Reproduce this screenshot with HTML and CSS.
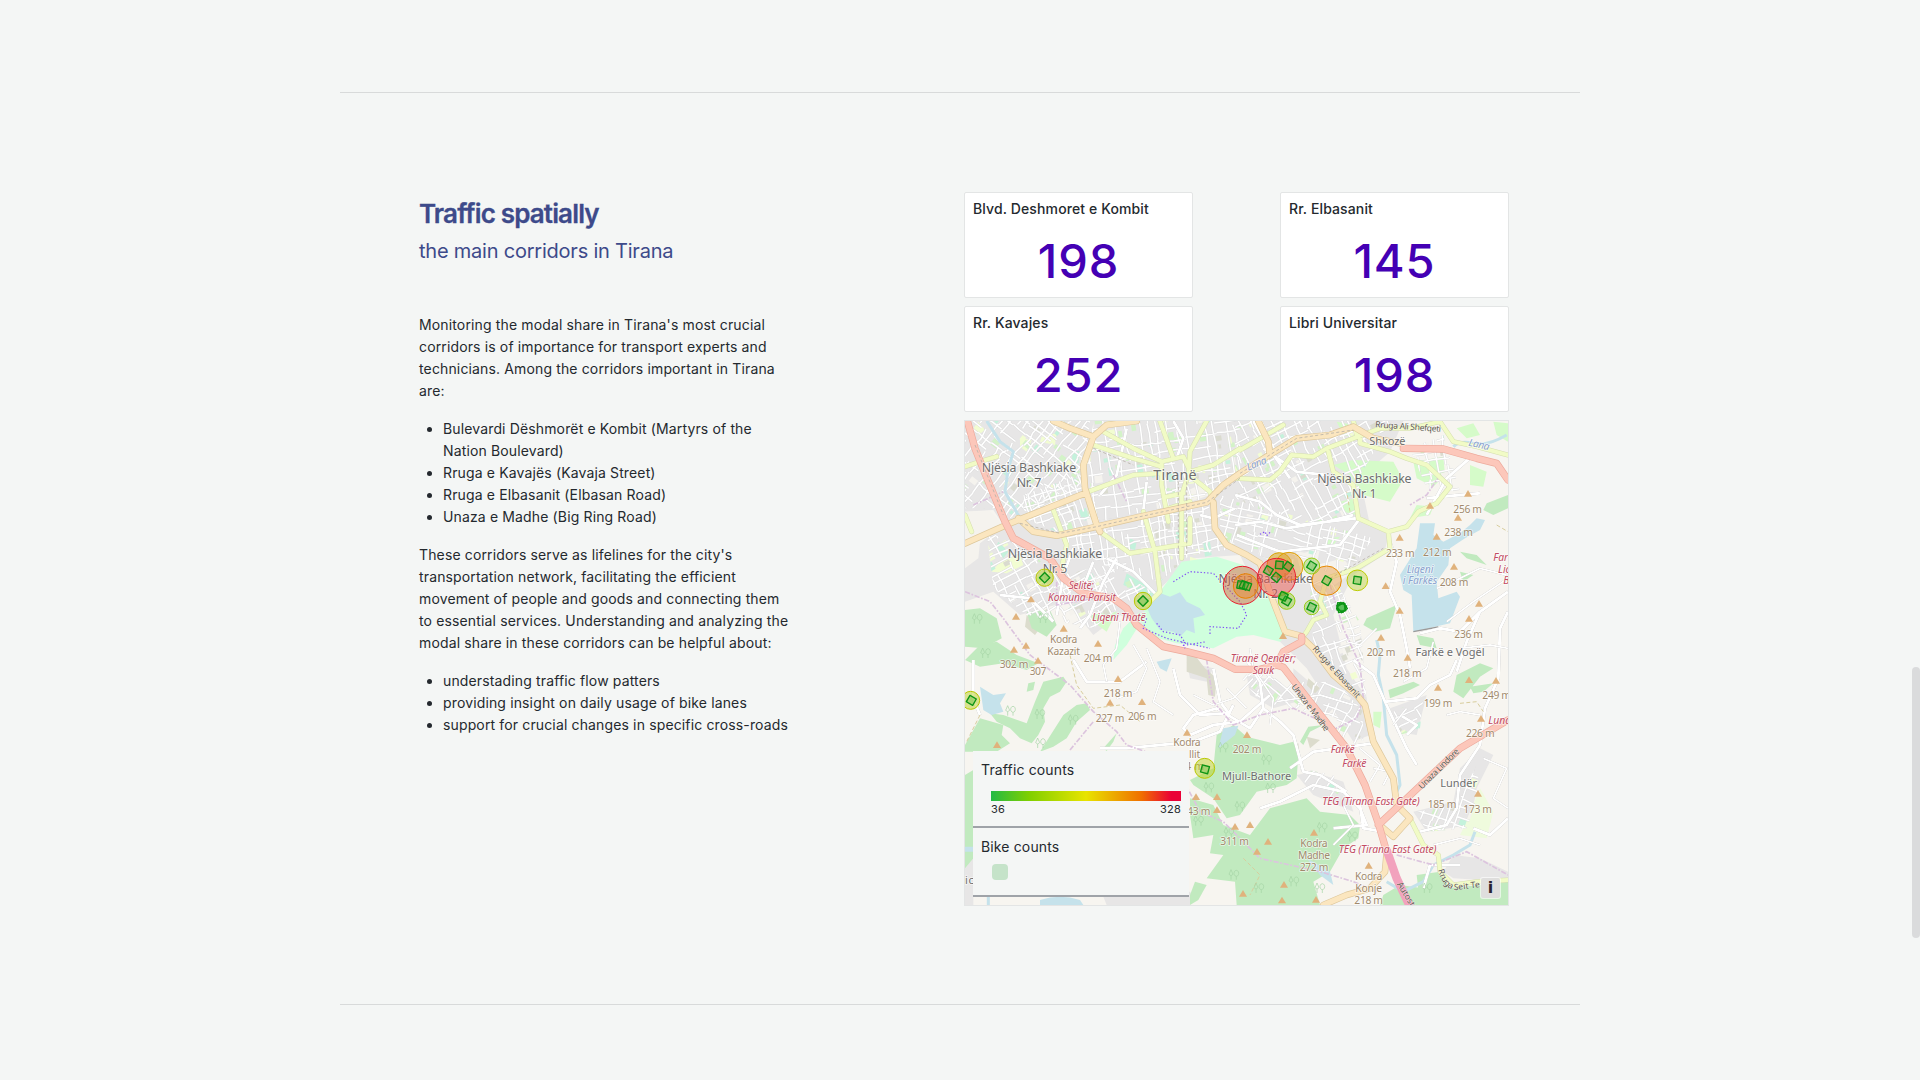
FILE: index.html
```html
<!DOCTYPE html>
<html lang="en">
<head>
<meta charset="utf-8">
<title>Traffic spatially</title>
<link rel="stylesheet" href="styles.css">
</head>
<body>
<main class="page">
<section class="section">
  <article class="copy">
    <h1>Traffic spatially</h1>
    <h2>the main corridors in Tirana</h2>
    <p>Monitoring the modal share in Tirana's most crucial corridors is of importance for transport experts and technicians. Among the corridors important in Tirana are:</p>
    <ul>
      <li>Bulevardi Dëshmorët e Kombit (Martyrs of the Nation Boulevard)</li>
      <li>Rruga e Kavajës (Kavaja Street)</li>
      <li>Rruga e Elbasanit (Elbasan Road)</li>
      <li>Unaza e Madhe (Big Ring Road)</li>
    </ul>
    <p>These corridors serve as lifelines for the city's transportation network, facilitating the efficient movement of people and goods and connecting them to essential services. Understanding and analyzing the modal share in these corridors can be helpful about:</p>
    <ul>
      <li>understading traffic flow patters</li>
      <li>providing insight on daily usage of bike lanes</li>
      <li>support for crucial changes in specific cross-roads</li>
    </ul>
  </article>
  <div class="panels">
    <div class="stats">
      <div class="stat"><h3>Blvd. Deshmoret e Kombit</h3><div class="value">198</div></div>
      <div class="stat"><h3>Rr. Elbasanit</h3><div class="value">145</div></div>
      <div class="stat"><h3>Rr. Kavajes</h3><div class="value">252</div></div>
      <div class="stat"><h3>Libri Universitar</h3><div class="value">198</div></div>
    </div>
    <div class="map">
      <svg class="tiles" viewBox="15 18 1629 1452" preserveAspectRatio="none">
        <defs>
          <path id="secondary" d="M430 50L520 100L605 140L605 210L625 320M400 90L520 130L605 155M600 18L640 130M740 18L690 110L685 180L665 240L665 430M605 140L670 125L700 190L750 230L760 270M840 100L760 150L690 170M385 230L520 180L605 175M420 350L510 415L690 385L690 310M550 290L585 410L600 530L560 570M15 155L60 140L110 125M280 285L320 390L300 480M15 300L35 350M840 105L970 30M825 190L930 195L960 170L995 120L1060 125L1100 100L1180 70L1260 40L1350 40L1440 20M1105 110L1120 170L1180 210L1195 310L1285 350L1340 335L1375 290L1430 265L1470 215L1400 150L1340 130L1290 110L1200 85L1200 60M1285 350L1290 400L1190 460L1100 490L1080 560L1100 600L1060 615L1040 650L1025 670M1440 20L1480 80L1550 95L1644 120M1350 1210L1390 1290L1435 1320L1440 1370L1480 1410L1550 1400L1644 1395M620 245L670 235M625 280L690 260M1180 18L1190 60"/>
          <path id="primary" d="M280 18L330 40L400 65L440 30L530 18M400 65L370 150L375 220L410 330L420 350M15 385L150 325L375 235M175 310L220 350L290 362L410 335L540 305L740 262L790 210L840 175L920 125L1010 70L1110 60L1180 35L1240 70L1320 85M895 18L925 80L930 120M760 262L765 340L800 390L860 420L900 445L940 560L975 650L1020 662L1060 700L1120 780L1190 840L1215 870L1240 980L1300 1090L1310 1170L1350 1210L1300 1265L1265 1235M1280 1315L1275 1370L1230 1420L1160 1440L1090 1470"/>
          <path id="trunk" d="M22 18L45 100L85 200L135 320L160 370L270 430L310 490L370 535L460 550L500 580L530 630L610 695L680 710L760 730L825 763H900L950 750L970 757L1050 860L1160 1000L1215 1110L1255 1225L1280 1310M950 750L970 710L1025 680V665M1255 1230L1330 1160L1500 1000L1644 915M1330 100L1450 102L1550 130L1610 145L1644 195"/>
        </defs>
        <!-- built-up areas -->
        <g class="urban">
          <path d="M15 18H1330L1290 110L1200 190L1230 330L1290 350L1270 420L1180 480L1120 600L1160 760L1220 850L1230 960L1180 980L1130 900L1040 760L960 680L840 420L700 430L600 520L560 640L480 600L400 660L320 560L180 600L100 530L15 560V420L130 330L100 285L15 290Z"/>
          <path d="M1000 760L1130 870L1100 900L1000 830Z"/>
          <path d="M680 740L760 760L740 800L690 790ZM860 780L960 800L1010 860L940 880L870 840Z"/>
          <path d="M1290 880L1400 840L1370 960L1310 950Z"/>
          <path d="M1360 1190L1480 1160L1500 1060L1560 1000L1600 1020L1550 1120L1530 1230L1400 1250Z"/>
          <path d="M1450 1370L1480 1320L1560 1330L1644 1370V1400L1480 1390Z"/>
          <path d="M1010 1080L1060 1070L1150 1100L1180 1190L1060 1140Z"/>
          <path d="M15 1350L40 1330V1470H15ZM430 1445L690 1430L700 1445L690 1470H440Z"/>
        </g>
        <g class="land">
          <path d="M15 290L90 288L128 330L60 365L15 380Z"/>
          <path d="M15 395L60 380L55 430L15 460Z"/>
          <path d="M1010 420L1080 400L1070 450L1150 430L1180 470L1110 520L1030 500Z"/>
          <path d="M675 230L740 200L750 240L690 260Z"/>
        </g>
        <g class="olive">
          <path d="M680 720L700 715L735 760L770 790L765 845L745 840L740 790L680 770ZM1045 790L1080 820L1065 835L1040 810ZM200 600L240 640L225 660L195 635ZM990 1000L1015 985L1020 1030L990 1015ZM1040 965L1080 975L1050 1000Z"/>
        </g>
        <!-- woods -->
        <g class="wood">
          <path d="M15 585L60 580L110 610L125 670L70 700L15 695Z"/>
          <path d="M200 590L270 585L290 630L260 665L215 640Z"/>
          <path d="M15 735L60 690L110 680L170 720L235 745L200 765L130 745L60 755Z"/>
          <path d="M15 990L60 910L130 930L125 960L150 985L110 1010H15Z"/>
          <path d="M250 800L310 785L320 800L300 830L270 845L250 880L255 920L235 960L215 985L180 970L150 940L110 920L90 895L130 900L200 925L225 860ZM205 805L225 800L220 825L200 830Z"/>
          <path d="M350 870L380 865L390 885L350 920L320 970L280 995L240 1010L310 900Z"/>
          <path d="M430 1000L470 955L460 980L440 1008Z"/>
          <path d="M15 1080L40 1065V1330L15 1360Z"/>
          <path d="M770 960L820 930L860 965L960 990L1000 980L1015 1020L1010 1090L980 1110L890 1130L840 1200L800 1210L760 1150L700 1110L690 1095L760 1060Z"/>
          <path d="M690 1150L760 1170L790 1230L870 1260L930 1180L1040 1150L1080 1190L1170 1200L1200 1230L1195 1270L1150 1300L1110 1370L1060 1400L1080 1470H830L825 1400L740 1390L790 1320L750 1315L760 1260L700 1270L690 1200Z"/>
          <path d="M690 1440L705 1400L740 1410L715 1455L690 1470Z"/>
          <path d="M1220 610L1310 570L1290 640L1245 650L1210 630Z"/>
          <path d="M1490 780L1560 745L1600 760L1560 785L1510 850L1480 830ZM1530 815L1600 805L1570 830L1540 835ZM1285 825L1360 800L1380 810L1330 835L1290 850Z"/>
          <path d="M1580 265L1644 240V280L1600 300L1570 285Z"/>
          <path d="M1370 1380L1440 1370L1470 1420L1644 1400V1470H1380Z"/>
          <path d="M1270 1440L1320 1410L1390 1420V1470H1260Z"/>
          <path d="M1500 410L1550 420L1580 450L1520 430ZM1500 470L1540 480L1510 500ZM1370 660L1420 670L1430 700L1380 690Z"/>
          <path d="M1020 980L1045 935L1090 930L1050 950L1030 990Z"/>
        </g>
        <g class="meadow">
          <path d="M1180 135L1300 140L1330 195L1290 260L1210 240L1170 180L1120 150Z"/>
          <path d="M1360 140L1450 125L1455 180L1420 215L1370 190Z"/>
          <path d="M1490 40L1540 25L1560 60L1520 70Z"/>
          <path d="M1140 260L1180 250L1190 300L1150 290ZM1100 370L1140 365L1120 390L1100 395ZM1130 20L1180 30L1190 70L1150 60ZM1600 20L1644 25V80L1610 60Z"/>
          <path d="M380 600L470 590L440 650L400 620ZM1240 890L1265 890L1260 940L1240 930Z"/>
          <path d="M1370 270L1420 275L1410 300L1350 310ZM1530 150L1580 170L1570 215L1530 210Z"/>
        </g>
        <path class="orchard" d="M1510 1240L1560 1120L1600 1190L1580 1270L1500 1260Z"/>
        <g class="grass">
          <path d="M40 40L55 20L75 45L55 60ZM245 65L290 55L285 90L240 80ZM180 70L215 75L200 110L180 95ZM120 440L180 420L190 450L140 475L95 470ZM715 150L740 155L735 175L715 170ZM690 425L720 435L715 465L690 460Z"/>
        </g>
        <g class="pitch">
          <path d="M338 110L358 108L356 145L335 140ZM115 380L145 410L130 430L108 395ZM650 345L680 350L675 375L645 370ZM500 475L590 530L570 545L490 510ZM510 370L530 380L525 405L505 400ZM730 385L750 380L755 420L735 425Z"/>
        </g>
        <g id="gardens"></g>
        <g id="streets"></g>
        <!-- lake park -->
        <path class="park" d="M600 530L665 440L770 425L850 450L915 500L940 570L990 650L960 680L880 660L830 665L760 700L650 685L560 660L540 605Z"/>
        <path class="park" d="M490 640L540 590L550 610L500 690L460 735L465 690Z"/>
        <g class="water">
          <path d="M553 560L590 530L630 545L660 532L680 560L720 580L735 600L700 610L705 655L680 645L660 665L640 650L600 645L575 610Z"/>
          <path d="M1380 325L1425 325L1420 360L1450 380L1500 355L1530 330L1550 310L1575 315L1560 345L1515 370L1470 400L1465 450L1430 500L1435 550L1490 530L1500 545L1470 625L1360 650L1355 540L1330 525L1320 480L1370 400Z"/>
          <path d="M60 815L100 840L138 835L120 865L130 890L95 900L70 885Z"/>
          <path d="M790 940L835 932L825 960L775 1000ZM590 740L635 730L620 770L600 760Z"/>
          <path d="M1040 1330L1110 1370L1120 1410L1080 1380Z"/>
          <path d="M240 1455Q300 1435 360 1455L370 1470H240ZM15 1295H40V1310H15Z"/>
        </g>
        <path class="dam" d="M1360 650L1435 636"/>
        <g class="streams">
          <path d="M80 18L120 80L160 110L145 160L135 230L180 310"/>
          <path d="M1250 675L1260 720L1255 780L1270 850L1280 960L1310 1020L1320 1110L1300 1150"/>
          <path d="M1480 95Q1500 75 1540 85Q1580 95 1640 60"/>
          <path d="M1545 1250L1530 1290L1480 1320L1420 1350L1390 1400L1330 1430L1280 1400"/>
          <path d="M85 1440V1470M100 1350L90 1440"/>
        </g>
        <g class="minor">
          <path d="M825 240L900 260L950 300L1020 330L1190 310M825 330L900 320L980 340L1100 320L1180 300M830 360L960 410L1140 390L1200 310M880 18L920 90L990 190M910 100L1010 170L1100 180"/>
          <path d="M1290 380L1310 440L1290 530L1320 600L1340 700L1350 760M1644 530L1560 590L1500 650L1440 640L1380 655M1560 590L1520 680L1490 770M1644 590L1620 640L1615 790L1575 880L1560 990L1500 1080L1490 1180L1460 1230L1380 1250"/>
          <path d="M1180 735L1240 780L1275 860L1370 850L1410 810L1470 780L1490 735M1275 860L1340 1000L1370 1050M1320 900L1370 930L1340 960"/>
          <path d="M860 735L900 800L910 880L960 920L1000 960L1030 1070L1080 1080L1160 1130M990 1060L1060 1010L1240 985M910 880L870 940L770 880L700 900L670 940L690 960L760 930L840 920L930 840"/>
          <path d="M760 760L780 860L810 900M640 760L660 840L720 900L800 895M820 870L780 950L700 980L500 1000L420 1000"/>
          <path d="M1200 1170L1210 1240L1270 1250M900 1180L960 1160L1060 1110L1150 1130L1200 1180L1220 1230L1120 1240"/>
          <path d="M470 430L430 500L390 600L360 640M440 430L520 470L590 540M400 440L360 540M340 400L310 480L290 600M120 540L210 550L280 620M500 40L470 180L420 240M340 735L380 800L480 800L560 740M1390 1420L1410 1350L1500 1350M1400 250L1500 240L1560 235M1644 1210L1590 1260L1540 1240"/>
          <path d="M40 735V850L60 900M640 18L670 70L650 130M560 200L545 330M720 300L760 310L825 280M1400 300L1460 190L1540 120"/>
        </g>
        <g class="lane">
          <path d="M480 620L470 700L430 750L440 800M520 690L560 760L530 830L470 850M560 700L600 800L580 860L640 900M1430 520L1480 500L1560 460L1640 480M1460 620L1540 560L1644 490M1560 900L1500 890L1460 900M1570 1030L1640 1060L1600 1150L1644 1180M1420 1290L1500 1270L1560 1290M1200 1000L1260 1050L1230 1100M1240 1060L1290 1070L1270 1110M1300 930L1340 880M1150 1170L1180 1230L1120 1290M870 700L880 760L940 850L930 930M800 820L860 880M950 860L1080 840L1180 870M700 840L760 870L820 850L880 790M1250 640L1200 690L1160 680M1420 680L1400 760L1330 800M1500 700L1590 690L1644 700"/>
        </g>
        <g class="boundary">
          <path d="M15 530L90 560L130 610L210 720L330 810L400 890L470 950L500 990L640 1040L720 1190L790 1220L900 1330L1080 1370L1180 1400L1250 1430"/>
          <path d="M1110 510L1150 640L1200 750L1210 850L1190 910L1130 940L1000 880L900 900L820 930L760 860L740 735"/>
          <path d="M330 1005L400 920M1440 180L1400 240L1350 270M40 270L130 230M460 180L500 260M1310 1320L1420 1350L1520 1310L1644 1380M290 500V570L400 550"/>
        </g>
        <path class="track" d="M330 720L350 810L400 880L480 870L540 920M60 900L20 980M1170 290L1160 230M1610 330L1644 350M850 1330L900 1380L870 1440M1500 865L1550 860L1570 890M1080 1290L1060 1340"/>
        <!-- classified roads -->
        <use href="#secondary" class="road case secondary"/>
        <use href="#secondary" class="road fill secondary"/>
        <use href="#primary" class="road case primary"/>
        <use href="#primary" class="road fill primary"/>
        <use href="#trunk" class="road case trunk"/>
        <use href="#trunk" class="road fill trunk"/>
        <path class="motorway" d="M1280 1305L1310 1390L1350 1475"/>
        <g class="paths">
          <path d="M640 500L690 470L760 475L840 560L860 600L835 640L750 635V660M560 610L550 640L620 670L750 700M590 625L610 650L660 660L680 690L740 680M665 680L675 700L670 685M900 358L915 350L920 362L930 352"/>
        </g>
        <g class="rail">
          <path d="M180 325L300 355L410 335L540 305L740 262L840 190M45 90L130 300M400 100L520 150M655 200V420M680 200V420M840 175L1010 70L1180 45M1110 490L1270 400"/>
        </g>
        <g id="trees"></g>
        <g id="peaks"></g>
        <!-- labels -->
        <g class="label place">
          <text x="207" y="171" textLength="283">Njësia Bashkiake</text><text x="207" y="217" textLength="74">Nr. 7</text>
          <text x="645" y="195" textLength="130" class="city">Tiranë</text>
          <text x="285" y="429" textLength="283">Njësia Bashkiake</text><text x="285" y="475" textLength="74">Nr. 5</text>
          <text x="1213" y="203" textLength="283">Njësia Bashkiake</text><text x="1213" y="249" textLength="74">Nr. 1</text>
          <text x="917" y="503" textLength="283">Njësia Bashkiake</text><text x="917" y="548" textLength="74">Nr. 2</text>
          <text x="1282" y="90" textLength="109" class="small">Shkozë</text>
          <text x="1470" y="724" textLength="207" class="small">Farkë e Vogël</text>
          <text x="1496" y="1115" textLength="110" class="small">Lundër</text>
          <text x="890" y="1094" textLength="208" class="small">Mjull-Bathore</text>
          <text x="28" y="1408" textLength="26" class="small">ic</text>
        </g>
        <g class="label exit">
          <text x="364" y="522" textLength="76">Selitë;</text><text x="366" y="558" textLength="204">Komuna Parisit</text>
          <text x="477" y="617" textLength="160">Liqeni Thatë</text>
          <text x="910" y="741" textLength="196">Tiranë Qendër;</text><text x="910" y="777" textLength="64">Sauk</text>
          <text x="1148" y="1015" textLength="72">Farkë</text><text x="1183" y="1056" textLength="72">Farkë</text>
          <text x="1233" y="1171" textLength="293">TEG (Tirana East Gate)</text>
          <text x="1283" y="1315" textLength="293">TEG (Tirana East Gate)</text>
          <text x="1600" y="438" class="start">Far</text><text x="1614" y="473" class="start">Lic</text><text x="1630" y="508" class="start">B</text><text x="1585" y="927" class="start">Lund</text>
        </g>
        <g class="label waterlabel">
          <text x="1380" y="473" textLength="80">Liqeni</text><text x="1380" y="508" textLength="104">i Farkës</text>
          <text transform="translate(865 167) rotate(-22)" textLength="62">Lana</text><text transform="translate(1524 92) rotate(12)" textLength="64">Lana</text>
        </g>
        <g class="label height">
          <text x="311" y="685" textLength="82">Kodra</text><text x="311" y="721" textLength="98">Kazazit</text><text x="414" y="742" textLength="86">204 m</text>
          <text x="162" y="760" textLength="86">302 m</text><text x="234" y="779" textLength="50">307</text>
          <text x="474" y="847" textLength="86">218 m</text><text x="450" y="920" textLength="86">227 m</text><text x="547" y="916" textLength="86">206 m</text>
          <text x="681" y="994" textLength="82">Kodra</text><text x="704" y="1030" textLength="34">llit</text><text x="704" y="1064" textLength="56">4 m</text>
          <text x="716" y="1200" textLength="70">43 m</text><text x="824" y="1290" textLength="86">311 m</text><text x="861" y="1015" textLength="86">202 m</text>
          <text x="1523" y="293" textLength="86">256 m</text><text x="1496" y="364" textLength="86">238 m</text><text x="1432" y="423" textLength="86">212 m</text><text x="1321" y="425" textLength="86">233 m</text><text x="1482" y="513" textLength="86">208 m</text>
          <text x="1526" y="669" textLength="86">236 m</text><text x="1263" y="724" textLength="86">202 m</text><text x="1342" y="786" textLength="86">218 m</text><text x="1434" y="876" textLength="86">199 m</text><text x="1610" y="853" textLength="86">249 m</text><text x="1561" y="966" textLength="86">226 m</text>
          <text x="1446" y="1178" textLength="86">185 m</text><text x="1553" y="1193" textLength="86">173 m</text>
          <text x="1062" y="1297" textLength="82">Kodra</text><text x="1062" y="1333" textLength="96">Madhe</text><text x="1062" y="1369" textLength="86">272 m</text>
          <text x="1226" y="1395" textLength="82">Kodra</text><text x="1226" y="1431" textLength="80">Konje</text><text x="1226" y="1467" textLength="86">218 m</text>
        </g>
        <g class="label street">
          <text transform="translate(993 815) rotate(53)" textLength="170">Unaza e Madhe</text>
          <text transform="translate(1056 702) rotate(48)" textLength="200">Rruga e Elbasanit</text>
          <text transform="translate(1386 1124) rotate(-45)" textLength="160">Unaza Lindore</text>
          <text transform="translate(1245 37) rotate(4)" textLength="198">Rruga Ali Shefqeti</text>
          <text transform="translate(1310 1408) rotate(58)">Autostr</text>
          <path id="seit" class="guide" d="M1434 1365Q1450 1425 1490 1425L1600 1412"/>
          <text><textPath href="#seit">Rruga Seit Te</textPath></text>
        </g>
        <g id="markers"></g>
      </svg>
      <div class="legend">
        <div class="layer">
          <div class="name">Traffic counts</div>
          <div class="ramp"></div>
          <div class="range"><span>36</span><span>328</span></div>
        </div>
        <div class="layer bikes">
          <div class="name">Bike counts</div>
          <div class="swatch"></div>
        </div>
      </div>
      <button class="info" aria-label="Attributions">i</button>
    </div>
  </div>
</section>
</main>
<div class="thumb"></div>
<script src="map.js"></script>
</body>
</html>
```
FILE: styles.css
```css
* { box-sizing: border-box; }
body { margin: 0; height: 1080px; overflow: hidden; background: #f4f6f5; color: #24292e; font: 400 14px/22px Inter, "Liberation Sans", sans-serif; letter-spacing: 0.14px; }
.page { width: 1240px; margin: 0 auto; padding-top: 92px; }
.section { height: 913px; padding: 99px 71px 0 79px; border-top: 1px solid #d8dada; border-bottom: 1px solid #d8dada; display: flex; justify-content: space-between; align-items: flex-start; }
.copy { width: 375px; padding-top: 7px; }
h1, h2, h3, p, ul { margin: 0; font-weight: 400; }
h1 { color: #3d4a8a; font-size: 26px; line-height: 30px; letter-spacing: -0.85px; font-weight: 600; -webkit-text-stroke: 0.3px #3d4a8a; }
h2 { color: #3d4a8a; font-size: 20px; line-height: 24px; margin: 10px 0 51px; letter-spacing: -0.22px; }
.copy p, .copy ul { margin-bottom: 16px; }
.copy ul { padding-left: 24px; }
.panels { width: 545px; }
.stats { display: grid; grid-template-columns: 229px 229px; justify-content: space-between; row-gap: 8px; }
.stat { height: 106px; background: #fff; border: 1px solid #e3e5e5; border-radius: 2px; padding: 5px 8px; }
.stat h3 { font-size: 14px; line-height: 22px; font-weight: 500; letter-spacing: 0.12px; }
.value { color: #4400b4; font-size: 47px; line-height: 50px; font-weight: 500; text-align: center; margin-top: 16px; letter-spacing: 0.9px; }

.map { position: relative; height: 486px; margin-top: 8px; border: 1px solid #e3e5e5; background: #f7f5f0; overflow: hidden; }
.tiles { display: block; width: 543px; height: 484px; }
.urban { fill: #e7e6e6; }
.land { fill: #f5f3ee; }
.olive { fill: #dcdccd; }
.wood { fill: #c1eabf; }
.meadow { fill: #d5fbc9; }
.orchard { fill: #effbdd; }
.grass, .garden-yellow { fill: #f2fdd2; }
.garden-green { fill: #d3f3c8; }
.garden-pale { fill: #f5f3ee; }
.garden-olive { fill: #dadbcf; }
.pitch { fill: #c4f2dc; }
.park { fill: #cfffdd; }
.water { fill: #c5e2eb; }
.dam { stroke: #999; stroke-width: 4; }
.streams { fill: none; stroke: #c5e2eb; stroke-width: 9; stroke-linejoin: round; }
.lanes-case, .lanes { fill: none; stroke-linejoin: round; }
.lanes-case { stroke: #dadada; stroke-width: 7; }
.lanes { stroke: #fff; stroke-width: 4.5; }
.minor, .lane { fill: none; stroke: #fff; stroke-width: 9; stroke-linejoin: round; filter: drop-shadow(0 0 1px #aaa); }
.lane { stroke-width: 5.5; }
.boundary { fill: none; stroke: #dcc4de; stroke-width: 5; stroke-dasharray: 16 5 5 5; }
.track { fill: none; stroke: #d8cd9d; stroke-width: 3; stroke-dasharray: 12 7; }
.road { fill: none; stroke-linejoin: round; stroke-linecap: round; }
.case.secondary { stroke: #d5deb0; stroke-width: 15; }
.fill.secondary { stroke: #f1fbc6; stroke-width: 12; }
.case.primary { stroke: #ddc79b; stroke-width: 20; }
.fill.primary { stroke: #fbe6bf; stroke-width: 16; }
.case.trunk { stroke: #edaa9c; stroke-width: 22; }
.fill.trunk { stroke: #fcc7ba; stroke-width: 18; }
.motorway { fill: none; stroke: #f2a2bd; stroke-width: 25; }
.paths { fill: none; stroke: #8050f5; stroke-width: 3.6; stroke-dasharray: 4 6; }
.rail { fill: none; stroke: #b8b2a8; stroke-width: 2.5; stroke-dasharray: 9 7; }
.peak { fill: #e0b27c; }
.tree { fill: none; stroke: #a4d3a4; stroke-width: 2; }
.guide { fill: none; stroke: none; }
.label { font-family: "Noto Sans", sans-serif; text-anchor: middle; paint-order: stroke; stroke: rgba(255,255,255,.65); stroke-width: 5; stroke-linejoin: round; letter-spacing: 0; }
.place { fill: #6e6e6e; font-size: 37px; }
.place .city { font-size: 43px; }
.place .small { font-size: 33px; }
.exit { fill: #c24b62; font-size: 31px; font-style: italic; }
.exit .start, .street { text-anchor: start; }
.waterlabel { fill: #8ba2ce; font-size: 31px; font-style: italic; }
.waterlabel text[transform] { text-anchor: start; }
.height { fill: #a18a6d; font-size: 31px; }
.street { fill: #5f5a50; font-size: 26px; stroke-width: 2; }

.legend { position: absolute; left: 8px; top: 330px; width: 216px; }
.layer { height: 77px; padding: 8px; background: #f4f6f5; border-bottom: 2px solid #9fa3a8; }
.layer.bikes { height: 69px; }
.name { height: 22px; }
.ramp { width: 190px; height: 10px; margin: 10px 0 0 10px; background: linear-gradient(90deg, #23ba45, #7fcf00 20%, #e8e400 50%, #f07000 79%, #ea0036 95%); }
.range { width: 190px; margin-left: 10px; display: flex; justify-content: space-between; font-size: 11px; line-height: 17px; letter-spacing: 0.2px; }
.swatch { width: 16px; height: 16px; margin: 6px 0 0 11px; border-radius: 4px; background: #c5e3c9; }
.info { position: absolute; right: 8px; bottom: 7px; width: 19px; height: 20px; padding: 0; border: 0; border-radius: 2px; background: #dfdedd; color: #2a2230; font: 700 16px/20px "DejaVu Sans", sans-serif; box-shadow: 0 0 0 1px rgba(255,255,255,.6); }
.thumb { position: fixed; right: 0; top: 667px; width: 8px; height: 271px; border-radius: 4px; background: #dadbdc; }
```
FILE: map.js
```js
const NS = 'http://www.w3.org/2000/svg';
const byId = id => document.getElementById(id);
function add(parent, tag, attrs) {
  const node = document.createElementNS(NS, tag);
  for (const key in attrs) node.setAttribute(key, attrs[key]);
  parent.appendChild(node);
  return node;
}
let seed = 7;
const rand = () => (seed = (seed * 16807) % 2147483647) / 2147483647;

// Local street grids: polygon, rotation in degrees, block size
const zones = [
  ['15,18 390,18 370,210 150,310 100,280 15,280', 38, 23],
  ['190,240 375,170 400,330 290,350 190,310', -18, 21],
  ['400,18 840,18 840,180 740,250 410,320 380,150', -9, 27],
  ['300,370 540,310 745,270 760,330 840,400 690,420 600,500 430,450', -9, 26],
  ['80,350 160,380 300,480 440,450 580,530 500,560 400,640 200,600 100,520', 62, 24],
  ['825,18 1300,18 1200,180 1190,310 1000,330 825,250', -27, 26],
  ['780,240 1100,330 1240,370 1160,480 940,440 780,370', 14, 28],
  ['1050,500 1120,490 1200,620 1220,850 1180,840 1060,700', -22, 25],
  ['830,770 1000,790 1040,890 900,860', 40, 27],
  ['1020,800 1130,800 1210,890 1210,1000 1100,940', 24, 28],
  ['1300,890 1390,850 1380,940 1320,960', 60, 30],
  ['1370,1190 1490,1170 1550,1050 1560,1130 1520,1240 1400,1250', 20, 32],
  ['1020,1060 1120,1080 1160,1160 1040,1120', 35, 38],
  ['1350,100 1450,60 1500,230 1400,220', 80, 34]
];
const streets = byId('streets');
const gardens = byId('gardens');
const kinds = ['garden-yellow', 'garden-green', 'garden-pale', 'garden-olive', 'garden-green', 'pitch'];
zones.forEach(([points, angle, step], i) => {
  const clip = add(streets, 'clipPath', { id: 'zone' + i });
  add(clip, 'polygon', { points });
  const p = points.split(' ').map(s => s.split(',').map(Number));
  const cx = p.reduce((a, b) => a + b[0], 0) / p.length;
  const cy = p.reduce((a, b) => a + b[1], 0) / p.length;
  const transform = `translate(${cx} ${cy}) rotate(${angle})`;
  const green = add(gardens, 'g', { 'clip-path': `url(#zone${i})` });
  const plots = add(green, 'g', { transform });
  for (let n = 0; n < 130; n++) {
    add(plots, 'rect', { class: kinds[Math.floor(rand() * kinds.length)], x: rand() * 700 - 350, y: rand() * 500 - 250, width: 8 + rand() * 16, height: 8 + rand() * 18 });
  }
  let d = '';
  for (let u = -420; u < 420; u += step * (0.6 + rand() * 0.7)) {
    for (let v = -420; v < 420;) {
      const len = step * (1.2 + rand() * 3.2);
      const bend = (rand() - 0.5) * 14;
      if (rand() < 0.8) d += `M${u} ${v}l${bend} ${len / 2}l${-bend / 2} ${len / 2}`;
      v += len;
    }
  }
  for (let v = -420; v < 420; v += step * (0.7 + rand() * 0.8)) {
    for (let u = -420; u < 420;) {
      const len = step * (1 + rand() * 3);
      if (rand() < 0.68) d += `M${u} ${v}l${len / 2} ${(rand() - 0.5) * 12}l${len / 2} 0`;
      u += len;
    }
  }
  const g = add(streets, 'g', { 'clip-path': `url(#zone${i})` });
  add(g, 'path', { class: 'lanes-case', d, transform });
  add(g, 'path', { class: 'lanes', d, transform });
});

[[213,553],[168,605],[311,641],[414,686],[198,692],[162,704],[234,737],[474,792],[450,863],[546,861],[681,953],
 [111,990],[708,1146],[771,1146],[771,1185],[825,1235],[861,960],[969,663],[1524,236],[1410,272],[1494,308],
 [1430,365],[1319,368],[1482,455],[1277,513],[1319,587],[1557,566],[1527,611],[1263,668],[1343,728],[1434,818],
 [1527,795],[1608,797],[1563,911],[1554,1136],[1062,1253],[1226,1352],[870,1230],[924,1280],[891,1310],[972,1409],
 [966,1456],[1068,1454],[849,1436]].forEach(([x, y]) =>
  add(byId('peaks'), 'path', { class: 'peak', d: `M${x} ${y - 11}l12 20h-24z` }));

[[50,612],[248,610],[75,715],[150,888],[238,898],[338,915],[240,985],[788,998],[745,1118],[714,1218],[805,1253],
 [820,1380],[918,1035],[930,1120],[1085,1238],[1176,1265],[838,1175],[895,1420],[1000,1400],[1078,1420],[1400,1420]].forEach(([x, y]) =>
  add(byId('trees'), 'path', { class: 'tree', d: `M${x - 7} ${y + 14}v-12M${x - 7} ${y + 2}l-6 -4l6 -14l6 14zM${x + 9} ${y + 14}v-10a7 9 0 1 1 .1 0` }));

// Count stations: x, y, radius, ring, fill
const sites = [
  [254,488,26,'#b9c800','#b8cf20'],[549,558,26,'#b9c800','#b8cf20'],[32,856,27,'#b9c800','#b8cf20'],
  [734,1060,30,'#b9c800','#b8cf20'],[958,450,37,'#dca400','#dca400'],[987,454,42,'#e0a000','#e2a53c'],
  [847,511,57,'#e82030','#d86040'],[857,513,37,'#e88400','#ea8a30'],[950,487,57,'#e82030','#ea5048'],
  [1100,497,44,'#e88a00','#e7a050'],[1192,496,31,'#bccc00','#bfd048'],[1055,453,24,'#97cc10','#9bd25a'],
  [1055,577,22,'#97cc10','#9bd25a'],[980,558,25,'#97cc10','#9bd238'],[970,544,14,'#6fc010','#6fc040']
];
const markers = byId('markers');
sites.forEach(([cx, cy, r, stroke, fill]) =>
  add(markers, 'circle', { cx, cy, r, stroke, fill, 'fill-opacity': 0.48, 'stroke-width': 3 }));
// Detector positions: x, y, rotation
[[254,488,45],[549,558,45],[34,856,30],[735,1063,15],[958,450,5],[985,454,35],[925,467,30],[949,487,40],[843,510,10],[852,511,25],[861,513,20],
 [1100,497,30],[1192,496,8],[1055,453,32],[1055,577,25],[980,558,30],[970,544,25],[1143,575,5],[1145,577,30],[1147,578,55],[1144,579,75]].forEach(([x, y, a]) =>
  add(markers, 'rect', { x: -11, y: -11, width: 22, height: 22, transform: `translate(${x} ${y}) rotate(${a})`, fill: '#30b030', 'fill-opacity': 0.3, stroke: '#0b9415', 'stroke-width': 4, 'stroke-linejoin': 'round' }));
```
